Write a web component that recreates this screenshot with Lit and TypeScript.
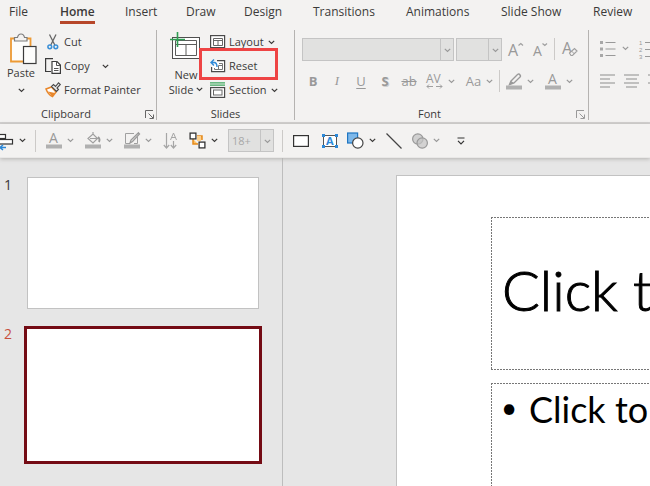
import { LitElement, html, svg, css } from "lit";
import { customElement, state } from "lit/decorators.js";
import { classMap } from "lit/directives/class-map.js";

const icon = (w: number, h: number, body: unknown) =>
  html`<svg class="icon" width=${w} height=${h} viewBox="0 0 ${w} ${h}" fill="none" aria-hidden="true">${body}</svg>`;

const chevron = () =>
  html`<svg class="chev" width="7" height="5" viewBox="0 0 7 5" fill="none" aria-hidden="true"><path d="M.8 .8 3.5 3.500 6.200 .8" stroke="currentColor" stroke-width="1.200"/></svg>`;

const launcher = () => icon(9, 9, svg`<path d="M.5 8V.5H8M3.500 3.500 8 8M8.500 4.500V8.500H4.500" stroke="currentColor"/>`);

const paste = () => icon(28, 32, svg`
  <path d="M2 5.500H21.500V28.500H2Z" fill="#fdfdfc" stroke="#ed9a34" stroke-width="1.800"/>
  <path d="M5.500 8V4.500H8.500C9 2 10 1 12 1S15 2 15.500 4.500H18V8Z" fill="#f3f2f1" stroke="#7c7c7c" stroke-width="1.200"/>
  <rect x="14.500" y="13.500" width="12.500" height="17" fill="#fdfdfc" stroke="#3b3b3b" stroke-width="1.200"/>`);

const cut = () => icon(16, 16, svg`
  <path d="M4.500 .5 9.800 11M11 .5 5.800 11" stroke="#666" stroke-width="1.300"/>
  <circle cx="4.800" cy="12.800" r="1.900" stroke="#3a8fd6" stroke-width="1.500"/>
  <circle cx="10.800" cy="12.800" r="1.900" stroke="#3a8fd6" stroke-width="1.500"/>`);

const copy = () => icon(16, 16, svg`
  <path d="M6 13.500H.6V.6H8" stroke="#3b3b3b" stroke-width="1.200"/>
  <path d="M7 3.500H12L15.400 7V15.400H7Z" fill="#fff" stroke="#3b3b3b" stroke-width="1.200"/>
  <path d="M11.500 3.500V7.500H15M9 10.500H13.500M9 12.500H13.500" stroke="#555"/>`);

const painter = () => icon(16, 16, svg`
  <path d="M1 7 6.500 5 11 10 7.500 14.500Q3 12.500 1 7Z" fill="#fff" stroke="#e8872b" stroke-width="1.500"/>
  <path d="M3 9.500 10 11 7.500 14.500Z" fill="#e8872b"/>
  <path d="M6.500 4.500 8.500 2.500 10.500 4.500 13.500 .8 15.300 2.500 12 6 13.500 7.500 11.500 9.500Z" fill="#eee" stroke="#4a4a4a" stroke-width="1.100"/>`);

const newSlide = () => icon(32, 30, svg`
  <rect x="2.500" y="6.500" width="27" height="21" fill="#fff" stroke="#4f4f4f"/>
  <path d="M5.500 9.500H26.500V24.500H5.500ZM5.500 13.500H26.500M16 13.500V24.500" stroke="#5c5c5c"/>
  <path d="M7.500 1V16M0 8.500H15" stroke="#2f9e53" stroke-width="1.600"/>`);

const layoutIcon = () => icon(16, 14, svg`
  <rect x=".6" y=".6" width="14" height="12" fill="#fff" stroke="#4a4a4a" stroke-width="1.200"/>
  <path d="M3.500 3.500H12.500V10.500H3.500ZM3.500 5.500H12.500M8 5.500V10.500" stroke="#666"/>`);

const resetIcon = () => icon(16, 14, svg`
  <path d="M7 1.600H14.600V12.600H1.600V8" fill="#fff" stroke="#4a4a4a" stroke-width="1.200"/>
  <path d="M9 4.500H12.500V10.500H4.500V9M8.500 6.500H12.500M8.500 6.500V10" stroke="#777"/>
  <path d="M4 .5 1 3.500 4 6.500M1 3.500H4Q7 3.500 7 8" stroke="#2f8ad8" stroke-width="1.400"/>`);

const sectionIcon = () => icon(16, 16, svg`
  <path d="M0 .8H15M0 3.200H15" stroke="#3fa75f" stroke-width="1.200"/>
  <rect x=".6" y="5.600" width="14" height="9.800" fill="#fff" stroke="#4a4a4a" stroke-width="1.200"/>
  <rect x="3.500" y="8" width="8.500" height="5" stroke="#666"/>`);

const growFont = () => icon(16, 16, svg`
  <text x="0" y="15" class="glyph huge">A</text><path d="M10.500 4.500 12.800 2.500 15 4.500" stroke="#a0a0a0" stroke-width="1.200"/>`);

const shrinkFont = () => icon(16, 16, svg`
  <text x="0" y="15" class="glyph big">A</text><path d="M9.500 2.500 11.800 4.500 14 2.500" stroke="#a0a0a0" stroke-width="1.200"/>`);

const clearFormat = () => icon(16, 16, svg`
  <text x="0" y="13" class="glyph huge">A</text>
  <path d="M7.500 12 12.500 7.500 15 10 10.500 14.500H9Z" fill="#f3f2f1" stroke="#a0a0a0" stroke-width="1.200"/><path d="m9.500 10 3 3" stroke="#a0a0a0"/>`);

const spacing = () => icon(17, 16, svg`
  <text x="0" y="10" class="glyph">AV</text>
  <path d="M1 13.500H7M10 13.500H16M3 11.500 1 13.500 3 15.500M14 11.500 16 13.500 14 15.500" stroke="#a0a0a0"/>`);

const highlighter = () => icon(16, 17, svg`
  <path d="M5 8 11.500 1.500Q13 .5 14 2T14 4L8 10 3.500 11.500Z" stroke="#9a9a9a" stroke-width="1.400"/><path d="M5 8 8 10 3 12Z" fill="#9a9a9a"/>
  <rect y="12.500" width="16" height="4" fill="#b0b0b0"/>`);

const fontColor = () => icon(16, 17, svg`
  <text x="3" y="11" class="glyph big">A</text><rect y="12.500" width="16" height="4" fill="#b0b0b0"/>`);

const fillIcon = () => icon(16, 17, svg`
  <path d="M3 6.500 8 2 12.500 6.500 8 11ZM8 2V0M5 6.500H12" stroke="#a0a0a0" stroke-width="1.200"/><path d="M13 5Q15.500 7 14 10" stroke="#999" stroke-width="1.800"/>
  <rect y="12.500" width="16" height="4" fill="#b0b0b0"/>`);

const outlineIcon = () => icon(16, 17, svg`
  <path d="M10 1.500H1.500V11.500H6M13.500 5V11.500H10" stroke="#a0a0a0"/>
  <path d="M14.500 .8 15.500 2 8.500 9.500 6 11 7 8Z" stroke="#999" stroke-width="1.300"/>
  <rect y="12.500" width="16" height="4" fill="#b0b0b0"/>`);

const alignObjects = () => icon(16, 18, svg`
  <rect x="-4.500" y="2.500" width="13" height="4" fill="#fff" stroke="#333" stroke-width="1.200"/>
  <rect x="-4.500" y="7.500" width="20" height="4.500" fill="#fff" stroke="#333" stroke-width="1.200"/>
  <path d="M9 15.500H3M6 13 3 15.500 6 18" stroke="#2b88d8" stroke-width="1.500"/>`);

const sortIcon = () => icon(16, 18, svg`
  <path d="M3.500 1V16M.8 13 3.500 16 6.200 13M10.500 9V16M7.800 13 10.500 16 13.200 13" stroke="#a6a6a6" stroke-width="1.200"/>
  <path d="M7.500 8 10.500 1 13.500 8M8.500 5.500H12.500" stroke="#a6a6a6"/>`);

const arrange = () => icon(17, 17, svg`
  <path d="M4 7V12H9M8 4H13V8" fill="#ffc266" stroke="#e58a1d" stroke-width="1.500"/><rect x="8" y="4" width="4" height="5" fill="#ffd08a"/>
  <rect x="1.100" y="1.100" width="5.800" height="5.800" fill="#fff" stroke="#333" stroke-width="1.300"/>
  <rect x="10.100" y="10.100" width="5.800" height="5.800" fill="#fff" stroke="#333" stroke-width="1.300"/>`);

const rectangle = () => icon(16, 12, svg`<rect x=".6" y=".6" width="14.800" height="10.800" fill="#fff" stroke="#333" stroke-width="1.200"/>`);

const textBox = () => icon(16, 14, svg`
  <rect x="1.500" y="1.500" width="13" height="11" fill="#fff" stroke="#555"/>
  <text x="4" y="11" class="glyph blue">A</text>
  <path d="M0 0h3v3H0zM13 0h3v3h-3zM0 11h3v3H0zM13 11h3v3h-3z" fill="#2b88d8"/>`);

const shapes = () => icon(17, 17, svg`
  <rect x=".6" y="1" width="10" height="10" fill="#7db8ea" stroke="#1f76c2" stroke-width="1.200"/>
  <circle cx="10.800" cy="11" r="5.200" fill="#fff" stroke="#444" stroke-width="1.200"/>`);

const lineIcon = () => icon(16, 16, svg`<path d="M.5 .5 15.500 15.500" stroke="#444" stroke-width="1.200"/>`);

const merge = () => icon(16, 16, svg`
  <circle cx="5.800" cy="6" r="5.200" fill="#d0d0d0" stroke="#999" stroke-width="1.200"/>
  <circle cx="10.200" cy="10" r="5.200" fill="#c4c4c4" fill-opacity=".7" stroke="#999" stroke-width="1.200"/>`);

const more = () => icon(8, 8, svg`<path d="M.5 1H7.500M1 3.800 4 6.800 7 3.800" stroke="#333" stroke-width="1.200"/>`);

const bullets = () => icon(16, 16, svg`
  <path d="M0 0h3v3H0zM0 6.500h3v3H0zM0 13h3v3H0z" fill="#a8a8a8"/>
  <path d="M5.500 1.500H15.500M5.500 8H15.500M5.500 14.500H15.500" stroke="#999" stroke-width="1.200"/>`);

const numbering = () => icon(16, 20, svg`
  <text x="0" y="6" class="glyph tiny">1</text><text x="0" y="13" class="glyph tiny">2</text><text x="0" y="20" class="glyph tiny">3</text>
  <path d="M6 3.500H16M6 10.500H16M6 17.500H16" stroke="#999" stroke-width="1.200"/>`);

const alignText = (d: string) => icon(15, 14, svg`<path d=${d} stroke="#8e8e8e" stroke-width="1.200"/>`);

@customElement("app-root")
export class AppRoot extends LitElement {
  @state() private tab = "Home";
  @state() private slide = 2;

  static styles = css`
    :host {
      display: flex;
      flex-direction: column;
      height: 100vh;
      overflow: hidden;
      background: #e6e6e6;
      color: #3b3a39;
      font: 11px/16px "Open Sans", "Noto Sans", sans-serif;
    }
    * { box-sizing: border-box; }
    button {
      display: flex;
      align-items: center;
      margin: 0;
      padding: 0;
      border: 0;
      background: none;
      color: inherit;
      font: inherit;
      white-space: nowrap;
    }
    .icon, .chev { display: block; flex: none; overflow: visible; }
    .glyph { fill: #999; font: 12px "Open Sans", sans-serif; }
    .big { font-size: 14px; }
    .huge { font-size: 16px; }
    .tiny { font: 6px "Liberation Sans", sans-serif; }
    .blue { fill: #2b88d8; font-size: 11px; font-weight: 700; }
    .tabs {
      flex: none;
      display: grid;
      grid-template-columns: 51px 65px 61px 58px 69px 93px 95px 92px auto;
      justify-content: start;
      padding-left: 9px;
      height: 28px;
      background: #f3f2f1;
      font-size: 12px;
    }
    .tab {
      justify-self: start;
      height: 24px;
      border-bottom: 3px solid transparent;
      padding-top: 2px;
    }
    .tab.on { border-color: #b7472a; font-weight: 600; }
    .ribbon {
      flex: none;
      display: flex;
      background: #f3f2f1;
      border-bottom: 2px solid #d0cfce;
      padding: 2px 0;
    }
    .group {
      flex: none;
      position: relative;
      display: flex;
      flex-direction: column;
      border-right: 1px solid #b5b3b1;
    }
    .clipboard { width: 157px; }
    .slides { width: 138px; }
    .font { width: 294px; }
    .paragraph { flex: 1; border: 0; overflow: hidden; }
    .tools { display: flex; height: 74px; }
    .caption { margin: 0; height: 16px; padding-right: 24px; font: inherit; line-height: 20px; text-align: center; }
    .slides .caption { padding-right: 0; }
    .launch { position: absolute; right: 2px; bottom: 1px; color: #666; }
    .font .launch { right: 3px; color: #999; }
    .tall { flex-direction: column; }
    .paste { width: 42px; padding-top: 3px; }
    .paste .icon { margin-left: 4px; }
    .paste .chev { margin-top: 7px; }
    .new-slide { width: 50px; padding: 1px 0 0 8px; margin-right: 3px; line-height: 15px; }
    .new-slide .icon { margin-bottom: 6px; }
    .stack { display: grid; grid-template-rows: repeat(3, 24px); padding-left: 3px; justify-items: start; }
    .slides .stack { padding-left: 0; }
    .stack button { gap: 3px; }
    .stack .chev { margin-left: 1px; }
    .wide .chev { margin-left: 9px; }
    .line { display: flex; align-items: center; }
    .highlight {
      position: absolute;
      left: 42px;
      top: 18px;
      width: 79px;
      height: 32px;
      border: 3px solid #ee4444;
      pointer-events: none;
    }
    .off, .off button { color: #999; }
    .fields, .marks { display: flex; align-items: center; }
    .fields { height: 35px; padding: 3px 0 0 7px; }
    .marks { height: 32px; padding-left: 6px; }
    .combo { position: relative; height: 23px; margin-right: 2px; color: #999; }
    .combo select {
      appearance: none;
      width: 100%;
      height: 100%;
      margin: 0;
      padding: 0 15px 0 3px;
      border: 1px solid #c4c4c4;
      border-radius: 0;
      background: linear-gradient(#c4c4c4, #c4c4c4) right 12px top / 1px 100% no-repeat, #e1e1e0;
      color: #a8a8a8;
      font: inherit;
      opacity: 1;
    }
    .combo .chev { position: absolute; right: 3px; top: 10px; }
    .face { width: 152px; }
    .size { width: 46px; margin-right: 6px; }
    .fields button { width: 25px; }
    .fields .rule { margin-right: 7px; margin-left: -4px; }
    .marks button { width: 24px; justify-content: center; font-size: 13px; }
    .marks .split { width: 39px; gap: 5px; justify-content: center; }
    .rule { flex: none; width: 1px; height: 22px; background: #cccac8; }
    .bold { font-weight: 700; }
    .italic { font-family: "Liberation Serif", serif; font-style: italic; }
    .under { text-decoration: underline; text-underline-offset: 2px; }
    .shadow { font-weight: 700; text-shadow: 1px 1px 0 #d0d0d0; }
    .strike { text-decoration: line-through; }
    .paragraph .tools { display: grid; grid-template-rows: 35px 32px; padding-left: 11px; }
    .lists, .aligns { display: flex; align-items: center; }
    .lists { padding-top: 2px; }
    .lists button { width: 39px; gap: 6px; flex: none; }
    .aligns button { width: 24px; flex: none; }
    .quick {
      flex: none;
      position: relative;
      z-index: 1;
      display: flex;
      align-items: center;
      height: 34px;
      background: #f3f2f1;
      border-bottom: 1px solid #e9e8e7;
      box-shadow: 0 1px 4px #b4b2b0;
    }
    .quick button { flex: none; width: 39px; gap: 5px; }
    .quick .first { width: 38px; margin-left: -3px; gap: 6px; }
    .quick .rule { margin-right: 10px; }
    .quick .single { width: 26px; }
    .quick .combo { flex: none; width: 46px; height: 23px; margin-right: 8px; }
    .quick .plain { width: 29px; }
    .quick .narrow { width: 25px; }
    .quick .last { width: 20px; margin-left: 6px; }
    .work { flex: 1; display: grid; grid-template-columns: 283px 1fr; min-height: 0; }
    .panel { margin: 0; padding: 19px 20px 0 3px; border-right: 1px solid #bdbdbd; list-style: none; }
    .panel li { margin-bottom: 17px; }
    .thumb { width: 100%; align-items: flex-start; font-size: 14px; line-height: 16px; }
    .num { width: 21px; text-align: left; padding: 0 0 0 1px; }
    .thumb.on .num { color: #c8503c; }
    .paper { flex: 1; height: 132px; margin: 0 3px; border: 1px solid #c2c2c2; background: #fff; }
    .thumb.on .paper { height: 138px; margin: 0; border: 3px solid #740b14; }
    .canvas { display: flex; padding: 17px 0 0 113px; min-width: 0; overflow: hidden; }
    .sheet {
      flex: 1;
      min-width: 0;
      padding: 41px 0 0 94px;
      border: solid #c2c2c2;
      border-width: 1px 0 0 1px;
      background: #fff;
      color: #000;
      font-family: Lato, sans-serif;
      white-space: nowrap;
    }
    .holder {
      overflow: hidden;
      background:
        repeating-linear-gradient(90deg, #777 0 2px, transparent 2px 3px) top / 100% 1px no-repeat,
        repeating-linear-gradient(90deg, #777 0 2px, transparent 2px 3px) bottom / 100% 1px no-repeat,
        repeating-linear-gradient(#777 0 2px, transparent 2px 3px) left / 1px 100% no-repeat;
    }
    .title {
      display: flex;
      align-items: center;
      height: 153px;
      margin: 0 0 13px;
      padding: 0 0 8px 11px;
      font-size: 56px;
      font-weight: 300;
      line-height: 68px;
      -webkit-text-stroke: 1px #000;
    }
    .body { height: 100%; margin: 0; padding: 4px 0 0 10px; font-size: 36px; line-height: 44px; list-style: none; }
    .body li { display: flex; }
    .body li::before { content: "•"; flex: none; width: 28px; font-size: 28px; line-height: 40px; }
  `;

  private split(label: string, pic: unknown, cls = "split") {
    return html`<button class=${cls} aria-label=${label}>${pic}${chevron()}</button>`;
  }

  render() {
    const tabs = ["File", "Home", "Insert", "Draw", "Design", "Transitions", "Animations", "Slide Show", "Review"];
    return html`
      <nav class="tabs" role="tablist">
        ${tabs.map((t) => html`<button role="tab" aria-selected=${t === this.tab} class=${classMap({ tab: true, on: t === this.tab })} @click=${() => (this.tab = t)}>${t}</button>`)}
      </nav>
      <div class="ribbon">
        <section class="group clipboard">
          <div class="tools">
            <button class="tall paste">${paste()}<span>Paste</span>${chevron()}</button>
            <div class="stack">
              <button>${cut()}Cut</button>
              <button class="wide">${copy()}Copy ${chevron()}</button>
              <button>${painter()}Format Painter</button>
            </div>
          </div>
          <h2 class="caption">Clipboard</h2>
          <button class="launch" aria-label="Clipboard options">${launcher()}</button>
        </section>
        <section class="group slides">
          <div class="tools">
            <button class="tall new-slide">${newSlide()}<span>New</span><span class="line">Slide&nbsp;${chevron()}</span></button>
            <div class="stack">
              <button>${layoutIcon()}Layout ${chevron()}</button>
              <button>${resetIcon()}Reset</button>
              <button>${sectionIcon()}Section ${chevron()}</button>
            </div>
          </div>
          <h2 class="caption">Slides</h2>
          <div class="highlight"></div>
        </section>
        <section class="group font">
          <div class="tools tall off">
            <div class="fields">
              <label class="combo face"><select disabled aria-label="Font"></select>${chevron()}</label>
              <label class="combo size"><select disabled aria-label="Font size"></select>${chevron()}</label>
              <button aria-label="Increase font size">${growFont()}</button>
              <button aria-label="Decrease font size">${shrinkFont()}</button>
              <span class="rule"></span>
              <button aria-label="Clear formatting">${clearFormat()}</button>
            </div>
            <div class="marks">
              <button class="bold">B</button>
              <button class="italic">I</button>
              <button class="under">U</button>
              <button class="shadow">S</button>
              <button class="strike">ab</button>
              ${this.split("Character spacing", spacing())}
              <button class="split">Aa${chevron()}</button>
              <span class="rule"></span>
              ${this.split("Highlight colour", highlighter())}
              ${this.split("Font colour", fontColor())}
            </div>
          </div>
          <h2 class="caption">Font</h2>
          <button class="launch" aria-label="Font options">${launcher()}</button>
        </section>
        <section class="group paragraph off" aria-label="Paragraph">
          <div class="tools">
            <div class="lists">
              ${this.split("Bullets", bullets())}
              <button aria-label="Numbering">${numbering()}</button>
            </div>
            <div class="aligns">
              <button aria-label="Align left">${alignText("M0 1H15M0 5H10M0 9H15M0 13H10")}</button>
              <button aria-label="Centre">${alignText("M0 1H15M2 5H13M0 9H15M2 13H13")}</button>
              <button aria-label="Align right">${alignText("M0 1H15M5 5H15M0 9H15M5 13H15")}</button>
            </div>
          </div>
        </section>
      </div>
      <div class="quick" role="toolbar" aria-label="Quick access">
        ${this.split("Align objects", alignObjects(), "first")}
        <span class="rule"></span>
        <span class="line off">
          ${this.split("Text colour", fontColor())}${this.split("Shape fill", fillIcon())}${this.split("Shape outline", outlineIcon())}
          <button class="single" aria-label="Sort">${sortIcon()}</button>
        </span>
        ${this.split("Arrange", arrange())}
        <label class="combo"><select disabled aria-label="Size"><option>18+</option></select>${chevron()}</label>
        <span class="rule"></span>
        <button class="plain" aria-label="Rectangle">${rectangle()}</button>
        <button class="narrow" aria-label="Text box">${textBox()}</button>
        ${this.split("Shapes", shapes())}
        <button class="single" aria-label="Line">${lineIcon()}</button>
        <span class="line off">${this.split("Merge shapes", merge())}</span>
        <button class="last" aria-label="More commands">${more()}</button>
      </div>
      <main class="work">
        <ol class="panel">
          ${[1, 2].map((n) => html`<li><button class=${classMap({ thumb: true, on: n === this.slide })} @click=${() => (this.slide = n)}><span class="num">${n}</span><span class="paper"></span></button></li>`)}
        </ol>
        <div class="canvas">
          <article class="sheet">
            <h1 class="holder title">Click t</h1>
            <ul class="holder body"><li>Click to</li></ul>
          </article>
        </div>
      </main>
    `;
  }
}
